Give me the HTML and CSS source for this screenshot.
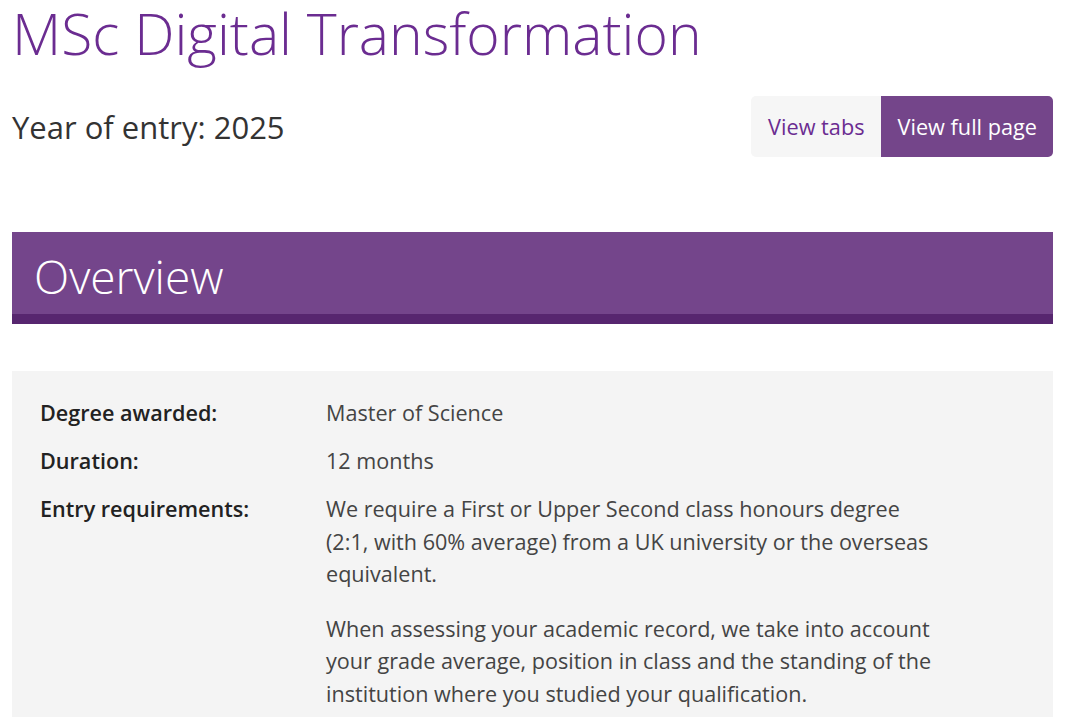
FILE: index.html
```html
<!DOCTYPE html>
<html lang="en">
<head>
    <meta charset="UTF-8">
    <meta name="viewport" content="width=device-width, initial-scale=1.0">
    <title>MSc Digital Transformation</title>
    <link rel="stylesheet" href="styles.css">
</head>
<body>
    <div class="page">
        <h1 class="course-title">MSc Digital Transformation</h1>

        <div class="entry-row">
            <p class="entry-year">Year of entry: 2025</p>
            <div class="view-switch">
                <a href="#" class="view-btn">View tabs</a>
                <a href="#" class="view-btn active">View full page</a>
            </div>
        </div>

        <h2 class="section-head">Overview</h2>

        <div class="facts">
            <div class="fact-row">
                <div class="fact-label">Degree awarded:</div>
                <div class="fact-value"><p>Master of Science</p></div>
            </div>
            <div class="fact-row">
                <div class="fact-label">Duration:</div>
                <div class="fact-value"><p>12 months</p></div>
            </div>
            <div class="fact-row">
                <div class="fact-label">Entry requirements:</div>
                <div class="fact-value">
                    <p>We require a First or Upper Second class honours degree (2:1, with 60% average) from a UK university or the overseas equivalent.</p>
                    <p>When assessing your academic record, we take into account your grade average, position in class and the standing of the institution where you studied your qualification.</p>
                </div>
            </div>
        </div>
    </div>
</body>
</html>
```

FILE: styles.css
```css
body {
    font-family: "Open Sans", Arial, sans-serif;
    margin: 0;
    padding: 0;
    background-color: #fff;
    color: #333;
}
.page {
    width: 1041px;
    padding: 0 12px;
}
.course-title {
    margin: 0;
    font-size: 57px;
    font-weight: 300;
    line-height: 66px;
    color: #6b2c91;
}
.entry-row {
    display: flex;
    justify-content: space-between;
    align-items: center;
    margin-top: 30px;
}
.entry-year {
    margin: 0;
    font-size: 31px;
    color: #333;
}
.view-switch {
    display: flex;
    border-radius: 5px;
    overflow: hidden;
}
.view-btn {
    display: block;
    padding: 0 16px 0 17px;
    height: 61px;
    line-height: 61px;
    font-size: 21.7px;
    text-decoration: none;
    background-color: #f6f6f6;
    color: #6b2c91;
}
.view-btn.active {
    background-color: #74458a;
    color: #fff;
}
.section-head {
    margin: 75px 0 0;
    padding: 0 22px;
    height: 82px;
    line-height: 88px;
    font-size: 46px;
    font-weight: 300;
    color: #fff;
    background-color: #74458b;
    border-bottom: 10px solid #57266f;
}
.facts {
    margin-top: 47px;
    padding: 26px 28px 10px;
    background-color: #f4f4f4;
}
.fact-row {
    display: flex;
    margin-bottom: 15.5px;
}
.fact-label {
    width: 286px;
    flex-shrink: 0;
    font-size: 21.6px;
    font-weight: 600;
    line-height: 32.5px;
    color: #222;
}
.fact-value {
    width: 615px;
    font-size: 21.6px;
    line-height: 32.5px;
    color: #444;
}
.fact-value p {
    margin: 0;
}
.fact-value p + p {
    margin-top: 22px;
}
```
